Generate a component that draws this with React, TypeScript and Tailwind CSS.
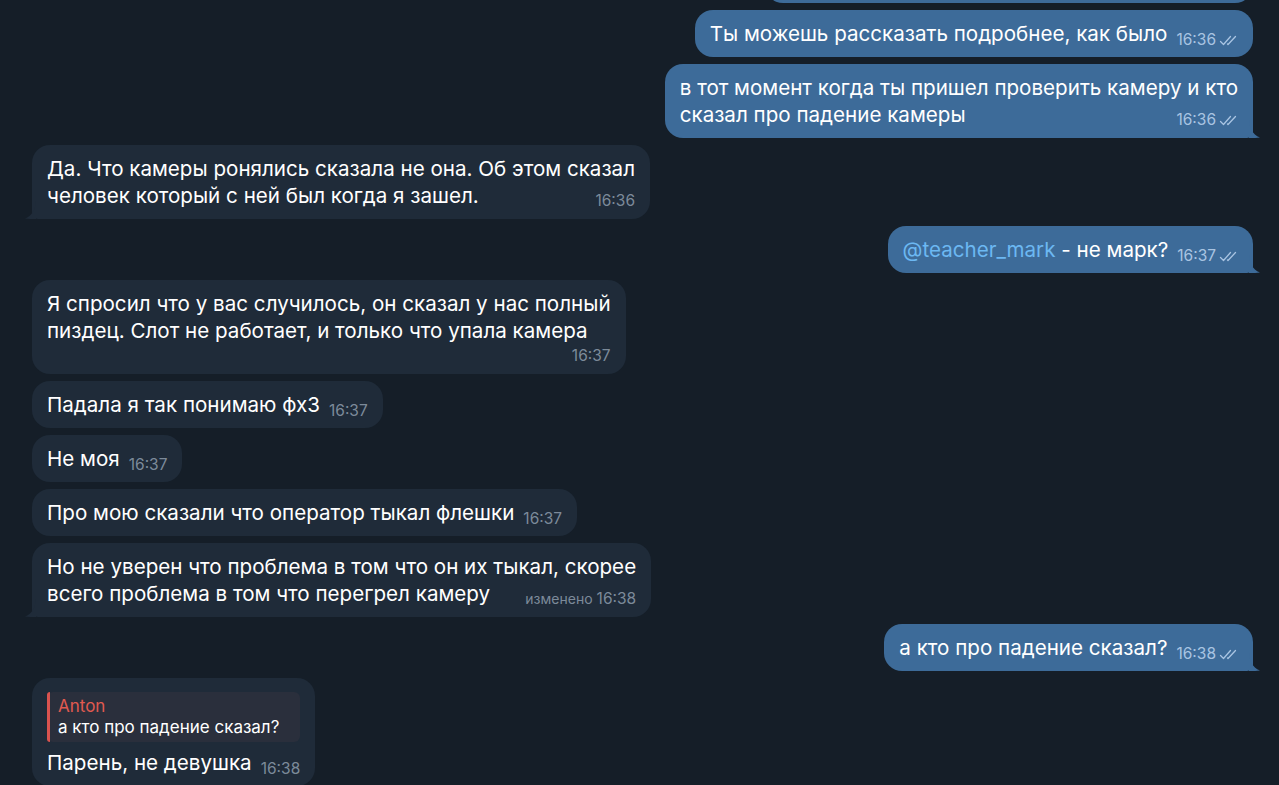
import React from 'react';

const FONT = { fontFamily: 'Inter, "Liberation Sans", Arial, sans-serif' };

function Checks() {
  return (
    <svg width="19" height="11" viewBox="0 0 19 11" fill="none" className="ml-[3px]">
      <path d="M1.5 6.5 L4.5 9.5 L11.5 1.5" stroke="currentColor" strokeWidth="1.3" strokeLinecap="round" strokeLinejoin="round" />
      <path d="M8.5 9 L9 9.5 L16.5 1.5" stroke="currentColor" strokeWidth="1.3" strokeLinecap="round" strokeLinejoin="round" />
    </svg>
  );
}

function Time({ t, out, edited }: { t: string; out?: boolean; edited?: boolean }) {
  return (
    <span
      className={`flex h-4 items-center whitespace-nowrap text-[15.5px] leading-4 ${out ? 'text-[#a9c4e2]' : 'text-[#7c8a99]'}`}
    >
      {edited && <span className="mr-[4px] text-[14px]">изменено</span>}
      {t}
      {out && <Checks />}
    </span>
  );
}

function Tail({ out }: { out?: boolean }) {
  return out ? (
    <svg width="12" height="18" viewBox="0 0 12 18" className="absolute bottom-0 right-[-8px]">
      <path d="M0 0 C0.5 8 3 14 11 17.6 C7 18.2 3 18 0 18 Z" fill="#3d6b99" />
    </svg>
  ) : (
    <svg width="12" height="18" viewBox="0 0 12 18" className="absolute bottom-0 left-[-8px]">
      <path d="M12 0 C11.5 8 9 14 1 17.6 C5 18.2 9 18 12 18 Z" fill="#1f2b39" />
    </svg>
  );
}

type Mode = 'inline' | 'overlay' | 'below';

function Bubble({
  out,
  tail,
  mode = 'inline',
  time,
  edited,
  children,
  reply,
}: {
  out?: boolean;
  tail?: boolean;
  mode?: Mode;
  time: string;
  edited?: boolean;
  children: React.ReactNode;
  reply?: React.ReactNode;
}) {
  const base = out
    ? `self-end mr-[26px] bg-[#3d6b99] ${tail ? 'rounded-[18px] rounded-br-[6px]' : 'rounded-[18px]'}`
    : `self-start ml-[32px] bg-[#1f2b39] ${tail ? 'rounded-[18px] rounded-bl-[6px]' : 'rounded-[18px]'}`;
  return (
    <div className={`relative px-[15px] py-[10px] text-white ${base}`}>
      {reply}
      {mode === 'inline' && (
        <div className="flex items-end">
          <span className="whitespace-nowrap text-[20.6px] leading-[27px]">{children}</span>
          <span className="ml-[9px] mb-[-1px]">
            <Time t={time} out={out} edited={edited} />
          </span>
        </div>
      )}
      {mode === 'overlay' && (
        <div className="flex flex-col">
          <div className="whitespace-nowrap text-[20.6px] leading-[27px]">{children}</div>
          <div className="-mt-4 self-end">
            <Time t={time} out={out} edited={edited} />
          </div>
        </div>
      )}
      {mode === 'below' && (
        <div className="flex flex-col">
          <div className="whitespace-nowrap text-[20.6px] leading-[27px]">{children}</div>
          <div className="mt-[4px] self-end">
            <Time t={time} out={out} edited={edited} />
          </div>
        </div>
      )}
      {tail && <Tail out={out} />}
    </div>
  );
}

export default function App() {
  return (
    <div className="h-[785px] w-full overflow-hidden bg-[#151e28]" style={FONT}>
      <div className="flex flex-col gap-[7px]">
        <div className="mr-[26px] -mt-[44px] h-[47px] w-[488px] self-end rounded-[18px] bg-[#3d6b99]" />

        <Bubble out time="16:36">Ты можешь рассказать подробнее, как было</Bubble>

        <Bubble out tail mode="overlay" time="16:36">
          в тот момент когда ты пришел проверить камеру и кто
          <br />
          сказал про падение камеры
        </Bubble>

        <Bubble tail mode="overlay" time="16:36">
          Да. Что камеры ронялись сказала не она. Об этом сказал
          <br />
          человек который с ней был когда я зашел.
        </Bubble>

        <Bubble out tail time="16:37">
          <span className="text-[#6cb8f2]">@teacher_mark</span> - не марк?
        </Bubble>

        <Bubble mode="below" time="16:37">
          Я спросил что у вас случилось, он сказал у нас полный
          <br />
          пиздец. Слот не работает, и только что упала камера
        </Bubble>

        <Bubble time="16:37">Падала я так понимаю фх3</Bubble>

        <Bubble time="16:37">Не моя</Bubble>

        <Bubble time="16:37">Про мою сказали что оператор тыкал флешки</Bubble>

        <Bubble tail mode="overlay" time="16:38" edited>
          Но не уверен что проблема в том что он их тыкал, скорее
          <br />
          всего проблема в том что перегрел камеру
        </Bubble>

        <Bubble out tail time="16:38">а кто про падение сказал?</Bubble>

        <Bubble
          time="16:38"
          reply={
            <div className="mt-[4px] mb-[7px] flex rounded-[6px] bg-[#2a2f3c]">
              <div className="w-[3px] rounded-l-[6px] bg-[#d9534f]" />
              <div className="px-[8px] py-[4px] pr-[16px]">
                <div className="text-[17px] leading-[21px] text-[#e05a50]">Anton</div>
                <div className="whitespace-nowrap text-[17px] leading-[21px] text-white">а кто про падение сказал?</div>
              </div>
            </div>
          }
        >
          Парень, не девушка
        </Bubble>
      </div>
    </div>
  );
}
